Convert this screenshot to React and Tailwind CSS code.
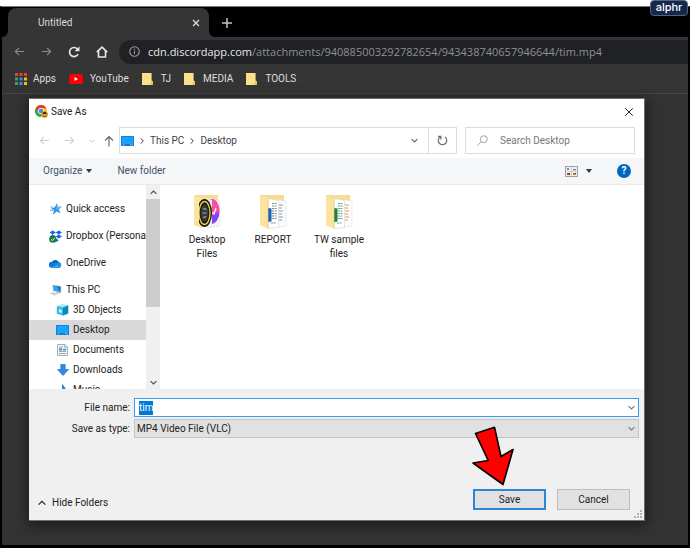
import React, { useEffect, useRef } from 'react'

const bookmarks = ['TJ', 'MEDIA', 'TOOLS']

const Stroke = ({ d, className, width = 1.2 }) => (
  <svg viewBox="0 0 12 12" className={className} fill="none" stroke="currentColor" strokeWidth={width} aria-hidden="true">
    <path d={d} />
  </svg>
)

const CHEVRON_DOWN = 'M1 3.5l5 5 5-5'
const CHEVRON_UP = 'M1 8.5l5-5 5 5'
const CHEVRON_RIGHT = 'M4 2l4 4-4 4'
const ARROW_LEFT = 'M11 6H1.5M5.5 2L1.5 6l4 4'
const ARROW_RIGHT = 'M1 6h9.5M6.5 2l4 4-4 4'
const ARROW_UP = 'M6 11.5V1.5M2 5.5l4-4 4 4'
const CROSS = 'M1.5 1.5l9 9M10.5 1.5l-9 9'

const AppsIcon = () => {
  const colors = ['#ea4335', '#ea4335', '#ea4335', '#34a853', '#4285f4', '#fbbc05', '#34a853', '#4285f4', '#fbbc05']
  return (
    <svg viewBox="0 0 12 12" className="size-3" aria-hidden="true">
      {colors.map((fill, i) => (
        <rect key={i} x={(i % 3) * 4.5} y={Math.floor(i / 3) * 4.5} width="3" height="3" fill={fill} />
      ))}
    </svg>
  )
}

const YouTubeIcon = () => (
  <svg viewBox="0 0 14 10" className="w-3.5 h-2.5" aria-hidden="true">
    <rect width="14" height="10" rx="2.5" fill="#f00" />
    <path d="M5.5 3v4L9 5z" fill="#fff" />
  </svg>
)

const BookmarkFolderIcon = () => (
  <svg viewBox="0 0 11 12" className="w-[11px] h-3" aria-hidden="true">
    <path d="M0 0h9.6v7.5l1.4 1V12H0z" fill="#fbe08a" />
    <path d="M9.6 8.2l1.4.5V12H8.7v-2z" fill="#e8c35a" />
  </svg>
)

const ChromeIcon = () => (
  <svg viewBox="0 0 13 13" className="size-[13px]" aria-hidden="true">
    <circle cx="6" cy="6" r="6" fill="#fbc116" />
    <path d="M.8 3A6 6 0 0 1 11.3 3.2H6L3.5 7.6z" fill="#e33b2e" />
    <path d="M.8 3A6 6 0 0 0 5.4 12L8.3 7.4 6 8.8 3.4 7.4z" fill="#2da94f" />
    <circle cx="6" cy="6" r="3" fill="#fff" />
    <circle cx="6" cy="6" r="2.3" fill="#4285f4" />
    <circle cx="9.6" cy="9.6" r="3.3" fill="#d89a1c" />
    <path d="M7.5 8.3l1-1.2h2.2l1.2 1.3-.7.4-.4 2.6H8.4l-.3-2.5z" fill="#4b2d12" />
    <path d="M8.4 9h2.4v2H8.4z" fill="#e9b640" />
  </svg>
)

const MonitorIcon = () => (
  <svg viewBox="0 0 13 10" className="w-[13px] h-2.5" aria-hidden="true">
    <rect width="13" height="10" rx=".6" fill="#1679cf" />
    <rect x=".8" y=".8" width="11.4" height="7.2" fill="#18a3ff" />
    <path d="M1.5 8.8h2M9 8.8h3" stroke="#9adcff" strokeWidth=".7" />
  </svg>
)

const QuickAccessIcon = () => (
  <svg viewBox="0 0 13 12" className="w-[13px] h-3" aria-hidden="true">
    <path d="M7.8.3l1.1 3.6 3.9-.3-3.1 2.7 1.9 4-3.8-1.8-3.8 3.3.9-4.4L2 5l3.9-.8z" fill="#2f97e4" />
    <path d="M7.8.3l1.1 3.6 3.9-.3L7 7z" fill="#5cb8f3" />
    <path d="M1.5 4h2M1 7.3h3" stroke="#1d78c8" strokeWidth=".7" />
  </svg>
)

const DropboxIcon = () => (
  <svg viewBox="0 0 13 13" className="size-[13px]" aria-hidden="true">
    <path
      d="M3.7.6l3.1 2-3.1 2-3.1-2zM9.8.6l3.1 2-3.1 2-3.1-2zM3.7 4.6l3.1 2-3.1 2-3.1-2zM9.8 4.6l3.1 2-3.1 2-3.1-2zM6.8 8.3l3 2-3 2-3-2z"
      fill="#0f62fa"
    />
    <circle cx="3.8" cy="9.2" r="3.6" fill="#15803d" />
    <path d="M2 9.3l1.4 1.3 2.3-2.6" fill="none" stroke="#fff" strokeWidth=".9" />
  </svg>
)

const OneDriveIcon = () => (
  <svg viewBox="0 0 13 9" className="w-[13px] h-[9px]" aria-hidden="true">
    <path d="M2.4 8.5A2.5 2.5 0 0 1 2.6 3.4 4 4 0 0 1 9.7 3a3 3 0 0 1 .7 5.5z" fill="#0364b8" />
    <path d="M5 4l4.8-.6a2.6 2.6 0 0 1 .6 5.1H7z" fill="#1490df" />
    <path d="M.3 7.2A2.4 2.4 0 0 1 4.4 4l6.8 4.2-1 .4H2.3A2.3 2.3 0 0 1 .3 7.2z" fill="#0f78d4" />
    <path d="M2.4 8.7l5-3 4.5 2.2-1.6.7z" fill="#28a8ea" />
  </svg>
)

const ThisPCIcon = () => (
  <svg viewBox="0 0 13 12" className="w-[13px] h-3" aria-hidden="true">
    <path d="M3.5.8l8.6 1.4v6.6L4.2 7z" fill="#8fa9bb" />
    <path d="M4.3 1.8l7 1.1v4.9L5 6.4z" fill="#2aa4f4" />
    <path d="M7.5 2.3l3.8.6v4.9z" fill="#0d6fc4" />
    <path d="M.3 9.2L4 8.2l5.2 1.6-3.4 1.6z" fill="#c5ced5" />
    <path d="M7.5 8.3l3.4 1" stroke="#8496a3" strokeWidth=".8" />
  </svg>
)

const ObjectsIcon = () => (
  <svg viewBox="0 0 13 12" className="w-[13px] h-3" aria-hidden="true">
    <path d="M.8 2.2L6 .4l6.2 1v8.2l-5.4 2L.8 9.8z" fill="#38bbe0" />
    <path d="M.8 2.2L6 .4l6.2 1-5.1 2z" fill="#a5e9f7" />
    <path d="M7.1 3.4l5.1-2v8.2l-5.4 2z" fill="#0f8ab8" />
    <path d="M3 5.2l2.7.6v3L3 8.2z" fill="#d8f6fc" />
  </svg>
)

const DocumentIcon = () => (
  <svg viewBox="0 0 11 12" className="w-[11px] h-3" aria-hidden="true">
    <path d="M.5.5h7.4l2.6 2.6v8.4H.5z" fill="#f5f8fa" stroke="#8b9aa5" strokeWidth=".8" />
    <path d="M7.7.6v2.7h2.7" fill="none" stroke="#8b9aa5" strokeWidth=".7" />
    <path d="M2 3h4M2 7.5h7M2 9.5h7" stroke="#7c93a5" strokeWidth=".8" />
    <path d="M2 4.2h3v2.2H2zM6 4.7h3v1.7H6z" fill="#3d93d6" />
  </svg>
)

const DownloadIcon = () => (
  <svg viewBox="0 0 12 12" className="size-3" aria-hidden="true">
    <path d="M3.8.5h4.4v5h3.3L6 11.6.5 5.5h3.3z" fill="#2f8ae0" stroke="#1b68b8" strokeWidth=".6" />
  </svg>
)

const MusicIcon = () => (
  <svg viewBox="0 0 12 12" className="size-3" aria-hidden="true">
    <path d="M5 .5h1.2C6.5 3 9.5 3.6 8.8 7 8 5.4 7 5 6.2 4.9v4.8A2.2 1.7 0 1 1 5 8.3z" fill="#1a8ae6" />
  </svg>
)

const DesktopFilesIcon = () => (
  <svg viewBox="0 0 28 35" className="w-7 h-[35px]" aria-hidden="true">
    <path d="M1 1h24v10H1z" fill="#f7dc92" />
    <path d="M17 4l10 3v25l-10 2z" fill="#f6f6f8" stroke="#dcdce0" strokeWidth=".5" />
    <ellipse cx="18.5" cy="17.5" rx="8" ry="12.5" fill="#b43af0" />
    <path d="M18 5c5-1 8.5 6 8.5 12L18 21z" fill="#fb4fa2" />
    <path d="M17 23l9-4c-.6 6-4 10-9 11z" fill="#7a45f5" />
    <path d="M18 18l3 2 2-6" fill="none" stroke="#fff" strokeWidth="1.3" />
    <path d="M14 4l5 2v28l-5 .5z" fill="#ededee" />
    <path d="M1 1l8 4v29l-8-3z" fill="#fbe3a0" />
    <ellipse cx="11.5" cy="19" rx="7.5" ry="14" fill="#18181a" />
    <ellipse cx="11.5" cy="19" rx="5.5" ry="11.5" fill="none" stroke="#e8cf3c" strokeWidth="1.3" />
    <ellipse cx="11.5" cy="19" rx="3.8" ry="8.5" fill="#3a3a3d" />
    <path d="M10 14.5l3.5.8M9.5 19h4M10 23.5l3.2-.8" stroke="#a5a5a8" strokeWidth="1.2" />
    <path d="M1 1l5 2.5V33l-5-2z" fill="#fbe3a0" />
  </svg>
)

const PapersIcon = ({ accent, lines, side }) => (
  <svg viewBox="0 0 28 35" className="w-7 h-[35px]" aria-hidden="true">
    <path d="M1 1h24v10H1z" fill="#f7dc92" />
    <path d="M18 5.5L27 7v25l-9 1.5z" fill="#fcfcfc" stroke="#dedee0" strokeWidth=".6" />
    <path d="M20 11h4M20 14h3M20 17h4M20 20h3M20 23h4M20 26h3" stroke={side} strokeWidth="1.2" />
    <path d="M9 4.5l10.5 2v27L9 34.5z" fill="#fff" stroke="#d3d3d6" strokeWidth=".6" />
    <path
      d="M13 9.5h5M13 12h5M13 14.5h5M13 17h5M13 19.5h5M13 22h5M13 24.5h5M12 29h5"
      stroke={lines}
      strokeWidth="1.1"
      strokeDasharray="2 .6"
    />
    <path d="M9 14l3.5.5v13L9 28z" fill={accent} />
    <path d="M1 1l8 4v29.5l-8-3z" fill="#fbe3a0" />
    <path d="M9 5v29.5" stroke="#e9cb7c" strokeWidth=".8" />
  </svg>
)

const ViewIcon = () => (
  <svg viewBox="0 0 13 11" className="w-[13px] h-[11px]" aria-hidden="true">
    <rect x=".5" y=".5" width="12" height="10" fill="#f5eeee" stroke="#a4a0a0" />
    <path d="M6.5 1v9M1 5.5h11" stroke="#bbb" strokeWidth=".6" />
    <path d="M2 2h2v2H2z" fill="#6a8fc5" />
    <path d="M8 3h3v1.2H8z" fill="#4b7fc0" />
    <path d="M2 7h3v2H2z" fill="#c73c2d" />
    <path d="M8 7h3v2H8z" fill="#b58a22" />
    <path d="M4 7h1v2H4zM10 7h1v1h-1z" fill="#333" />
  </svg>
)

const CaretIcon = () => (
  <svg viewBox="0 0 6 4" className="w-1.5 h-1" aria-hidden="true">
    <path d="M0 0h6L3 4z" fill="#2c3a52" />
  </svg>
)

const places = [
  { name: 'Quick access', icon: QuickAccessIcon },
  { name: 'Dropbox (Persona', icon: DropboxIcon },
  { name: 'OneDrive', icon: OneDriveIcon },
  { name: 'This PC', icon: ThisPCIcon },
]

const pcFolders = [
  { name: '3D Objects', icon: ObjectsIcon },
  { name: 'Desktop', icon: MonitorIcon, active: true },
  { name: 'Documents', icon: DocumentIcon },
  { name: 'Downloads', icon: DownloadIcon },
  { name: 'Music', icon: MusicIcon },
]

const files = [
  { name: 'Desktop Files', icon: <DesktopFilesIcon /> },
  { name: 'REPORT', icon: <PapersIcon accent="#1f5fb0" lines="#7d8b99" side="#8a96a3" /> },
  { name: 'TW sample files', icon: <PapersIcon accent="#15803d" lines="#5fae86" side="#e59a63" /> },
]

const TabStrip = () => (
  <div className="flex h-[30px] items-end bg-black pl-1.5 text-[#dcdcdc]">
    <div className="relative flex h-[29px] w-[201px] items-center justify-between rounded-t-lg bg-[#353535] pr-[9px] pl-[30px]">
      <svg viewBox="0 0 6 6" className="absolute bottom-0 -left-1.5 size-1.5" aria-hidden="true">
        <path d="M6 0v6H0a6 6 0 0 0 6-6z" fill="#353535" />
      </svg>
      <svg viewBox="0 0 6 6" className="absolute -right-1.5 bottom-0 size-1.5" aria-hidden="true">
        <path d="M0 0v6h6a6 6 0 0 1-6-6z" fill="#353535" />
      </svg>
      <span>Untitled</span>
      <button aria-label="Close tab">
        <Stroke d={CROSS} className="size-2" width={2} />
      </button>
    </div>
    <button aria-label="New tab" className="flex h-[29px] items-center pl-3 text-[#c4c4c4]">
      <Stroke d="M6 1v10M1 6h10" className="size-3" width={1.5} />
    </button>
  </div>
)

const Toolbar = () => (
  <div className="flex h-[30px] items-center bg-[#353535] pt-[3px] pb-1 pl-3">
    <div className="flex w-[105px] items-center gap-4 text-[#e6e6e6]">
      <button aria-label="Back" className="text-[#8a8a8a]">
        <Stroke d={ARROW_LEFT} className="size-[11px]" width={1.3} />
      </button>
      <button aria-label="Forward" className="text-[#8a8a8a]">
        <Stroke d={ARROW_RIGHT} className="size-[11px]" width={1.3} />
      </button>
      <button aria-label="Reload">
        <svg viewBox="0 0 12 12" className="size-3" fill="none" stroke="currentColor" strokeWidth="1.7" aria-hidden="true">
          <path d="M10 8.2A4.5 4.5 0 1 1 9.4 3" />
          <path d="M11.5.3v4.9H6.6z" fill="currentColor" stroke="none" />
        </svg>
      </button>
      <button aria-label="Home">
        <Stroke d="M.8 6.2L6 1.2l5.2 5M2.5 5v6h7V5" className="size-3" width={1.6} />
      </button>
    </div>
    <div className="flex h-6 flex-1 items-center gap-2 rounded-l-full bg-[#202124] pl-2.5">
      <svg viewBox="0 0 12 12" className="size-[11px] text-[#9b9b9b]" fill="none" stroke="currentColor" strokeWidth="1.2" aria-hidden="true">
        <circle cx="6" cy="6" r="5.2" />
        <path d="M6 5.2v3.6M6 3v1.3" />
      </svg>
      <p className="font-['Open_Sans','Noto_Sans',sans-serif] text-[11px] whitespace-nowrap text-[#8f9093]">
        <span className="text-[#e8e8e8]">cdn.discordapp.com</span>/attachments/940885003292782654/943438740657946644/tim.mp4
      </p>
    </div>
  </div>
)

const BookmarksBar = () => (
  <nav className="flex h-[27px] items-center gap-[13px] border-b border-[#4a4444] bg-[#353535] pb-0.5 pl-[13px] text-[#dedede]">
    <a href="#apps" className="flex items-center gap-1.5">
      <AppsIcon />
      Apps
    </a>
    <a href="#youtube" className="flex items-center gap-[7px]">
      <YouTubeIcon />
      YouTube
    </a>
    {bookmarks.map((name) => (
      <a key={name} href={`#${name}`} className="flex items-center gap-2">
        <BookmarkFolderIcon />
        {name}
      </a>
    ))}
  </nav>
)

const AddressRow = () => (
  <div className="flex h-[27px] items-center pr-[9px] text-[#3f3f3f]">
    <div className="flex w-[90px] shrink-0 items-center gap-3.5 pl-2.5">
      <button aria-label="Back" className="text-[#d0d0d0]">
        <Stroke d={ARROW_LEFT} className="size-[11px]" />
      </button>
      <button aria-label="Forward" className="text-[#d0d0d0]">
        <Stroke d={ARROW_RIGHT} className="size-[11px]" />
      </button>
      <div className="flex items-center gap-2">
        <button aria-label="Recent locations" className="text-[#c4c4c4]">
          <Stroke d={CHEVRON_DOWN} className="size-1.5" width={1.8} />
        </button>
        <button aria-label="Up one level" className="text-[#666]">
          <Stroke d={ARROW_UP} className="size-3" />
        </button>
      </div>
    </div>
    <div className="flex h-full flex-1 items-center border border-[#dcdcdc] pl-px">
      <MonitorIcon />
      <Stroke d={CHEVRON_RIGHT} className="mx-1 size-2" width={1.5} />
      <button>This PC</button>
      <Stroke d={CHEVRON_RIGHT} className="mx-1 size-2" width={1.5} />
      <button>Desktop</button>
      <button aria-label="Previous locations" className="ml-auto pr-2.5 text-[#666]">
        <Stroke d={CHEVRON_DOWN} className="size-[7px]" width={2} />
      </button>
      <button aria-label="Refresh" className="flex h-full w-7 items-center justify-center border-l border-[#dcdcdc] text-[#707070]">
        <svg viewBox="0 0 12 12" className="size-[11px]" fill="none" stroke="currentColor" strokeWidth="1.4" aria-hidden="true">
          <path d="M8.6 2.2A4.6 4.6 0 1 1 3.4 2.2M1 1.6h3.2v3.2" />
        </svg>
      </button>
    </div>
    <label className="ml-2 flex h-full w-[170px] items-center gap-3 border border-[#dcdcdc] pl-[11px]">
      <svg viewBox="0 0 12 12" className="size-[11px] shrink-0 text-[#9a9a9a]" fill="none" stroke="currentColor" strokeWidth="1" aria-label="Search">
        <circle cx="7.4" cy="4.6" r="3.8" />
        <path d="M4.6 7.4L.6 11.4" />
      </svg>
      <input type="search" placeholder="Search Desktop" className="w-full min-w-0 outline-none placeholder:text-[#787878]" />
    </label>
  </div>
)

const CommandBar = () => (
  <div className="flex h-[27px] items-center border-b border-[#e6e9ed] bg-[#f4f6f8] pr-[13px] pl-3.5 text-[#41536b]">
    <button className="flex items-center gap-1">
      Organize
      <CaretIcon />
    </button>
    <button className="ml-[25px]">New folder</button>
    <button aria-label="Change your view" className="ml-auto">
      <ViewIcon />
    </button>
    <button aria-label="More options" className="ml-2">
      <CaretIcon />
    </button>
    <button aria-label="Help" className="ml-[25px] flex size-3.5 items-center justify-center rounded-full bg-[#0067c0] font-bold text-white">
      ?
    </button>
  </div>
)

const Sidebar = () => (
  <div className="flex h-[204px] w-[131px] shrink-0 overflow-hidden">
    <div className="w-[117px] overflow-hidden pt-3.5 whitespace-nowrap">
      <ul className="flex flex-col gap-[7px]">
        {places.map(({ name, icon: Icon }) => (
          <li key={name} className="flex h-5 items-center gap-1 pl-5">
            <span className="flex w-[13px] shrink-0 justify-center">
              <Icon />
            </span>
            {name}
          </li>
        ))}
      </ul>
      <ul>
        {pcFolders.map(({ name, icon: Icon, active }) => (
          <li key={name} className={`flex h-5 items-center gap-1 pl-[27px] ${active ? 'bg-[#d9d9d9]' : ''}`}>
            <span className="flex w-[13px] shrink-0 justify-center">
              <Icon />
            </span>
            {name}
          </li>
        ))}
      </ul>
    </div>
    <div className="flex w-3.5 flex-col bg-[#f0f0f0] text-[#505050]">
      <button aria-label="Scroll up" className="flex h-3.5 items-center justify-center">
        <Stroke d={CHEVRON_UP} className="size-[7px]" width={2} />
      </button>
      <div className="h-[108px] bg-[#cdcdcd]" />
      <button aria-label="Scroll down" className="mt-auto flex h-3.5 items-center justify-center">
        <Stroke d={CHEVRON_DOWN} className="size-[7px]" width={2} />
      </button>
    </div>
  </div>
)

const DialogFooter = () => {
  const nameRef = useRef(null)

  // the suggested name starts out selected so typing replaces it
  useEffect(() => {
    nameRef.current.focus()
    nameRef.current.select()
  }, [])

  return (
    <div className="relative bg-[#f0f0f0] pt-[9px] pr-[5px] pb-2.5">
      <div className="grid grid-cols-[101px_1fr] items-center gap-x-1 gap-y-0.5">
        <label htmlFor="file-name" className="text-right">
          File name:
        </label>
        <div className="flex h-[19px] items-center border border-[#3f9be8] bg-white pr-[3px] pl-1">
          <input
            id="file-name"
            ref={nameRef}
            defaultValue="tim"
            className="min-w-0 flex-1 outline-none selection:bg-[#0078d7] selection:text-white"
          />
          <Stroke d={CHEVRON_DOWN} className="size-[7px] text-[#777]" width={1.8} />
        </div>
        <label htmlFor="save-type" className="text-right">
          Save as type:
        </label>
        <div className="flex h-[19px] items-center border border-[#c4c4c4] bg-[#e1e1e1] pr-[3px] pl-0.5">
          <select id="save-type" className="min-w-0 flex-1 appearance-none outline-none">
            <option>MP4 Video File (VLC)</option>
          </select>
          <Stroke d={CHEVRON_DOWN} className="size-[7px] text-[#777]" width={1.8} />
        </div>
      </div>
      <div className="mt-[51px] flex items-center pr-[9px] pl-[9px]">
        <button className="mt-1.5 flex items-center gap-1.5">
          <Stroke d={CHEVRON_UP} className="size-2" width={1.8} />
          Hide Folders
        </button>
        <button className="mr-[11px] ml-auto h-[21px] w-[73px] border-2 border-[#2b86d9] bg-[#e1e1e1]">Save</button>
        <button className="h-[21px] w-[73px] border border-[#bdbdbd] bg-[#e1e1e1]">Cancel</button>
      </div>
      <svg viewBox="0 0 8 8" className="absolute right-0.5 bottom-0.5 size-2" fill="#b4b4b4" aria-hidden="true">
        <path d="M6 0h2v2H6zM3 3h2v2H3zM6 3h2v2H6zM0 6h2v2H0zM3 6h2v2H3zM6 6h2v2H6z" />
      </svg>
      <svg viewBox="0 0 42 60" className="absolute right-[130px] bottom-[34px] h-[60px] w-[42px]" aria-hidden="true">
        <path
          d="M3.5 7.5L22.5 1.2 29 30.5 41 23.5 31 58.5 1 37 16.2 34.5z"
          fill="#f00"
          stroke="#000"
          strokeWidth="1.6"
          strokeLinejoin="round"
        />
      </svg>
    </div>
  )
}

const SaveDialog = () => (
  <section
    aria-label="Save As"
    className="mt-1 mr-[43px] ml-[27px] border border-l-0 border-[#6e6e6e] bg-white text-[#222] shadow-[0_3px_12px_2px_rgba(0,0,0,0.45)]"
  >
    <header className="flex h-7 items-center gap-[3px] pr-2.5 pb-[3px] pl-1.5">
      <ChromeIcon />
      <h1>Save As</h1>
      <button aria-label="Close" className="ml-auto">
        <Stroke d={CROSS} className="size-2.5" />
      </button>
    </header>
    <AddressRow />
    <div className="h-1" />
    <CommandBar />
    <div className="flex">
      <Sidebar />
      <ul className="flex flex-1 pt-[9px] pl-3.5">
        {files.map(({ name, icon }) => (
          <li key={name} className="flex w-[66px] flex-col items-center gap-1 px-1.5 text-center">
            {icon}
            <span>{name}</span>
          </li>
        ))}
      </ul>
    </div>
    <DialogFooter />
  </section>
)

export default function App() {
  return (
    <div className="relative flex min-h-screen flex-col bg-white pt-1.5 font-['Roboto','Noto_Sans',sans-serif] text-[10px] leading-[14px]">
      <span className="absolute top-0 right-0.5 flex h-4 w-[38px] items-center justify-center rounded-sm border border-[#56657c] bg-[#14284b] pb-0.5 font-['Inter',sans-serif] text-[11px] font-medium text-white">
        alphr
      </span>
      <main className="flex flex-1 flex-col border-x-2 border-t border-b-3 border-black border-t-[#777] bg-[#333]">
        <TabStrip />
        <Toolbar />
        <BookmarksBar />
        <SaveDialog />
      </main>
    </div>
  )
}
